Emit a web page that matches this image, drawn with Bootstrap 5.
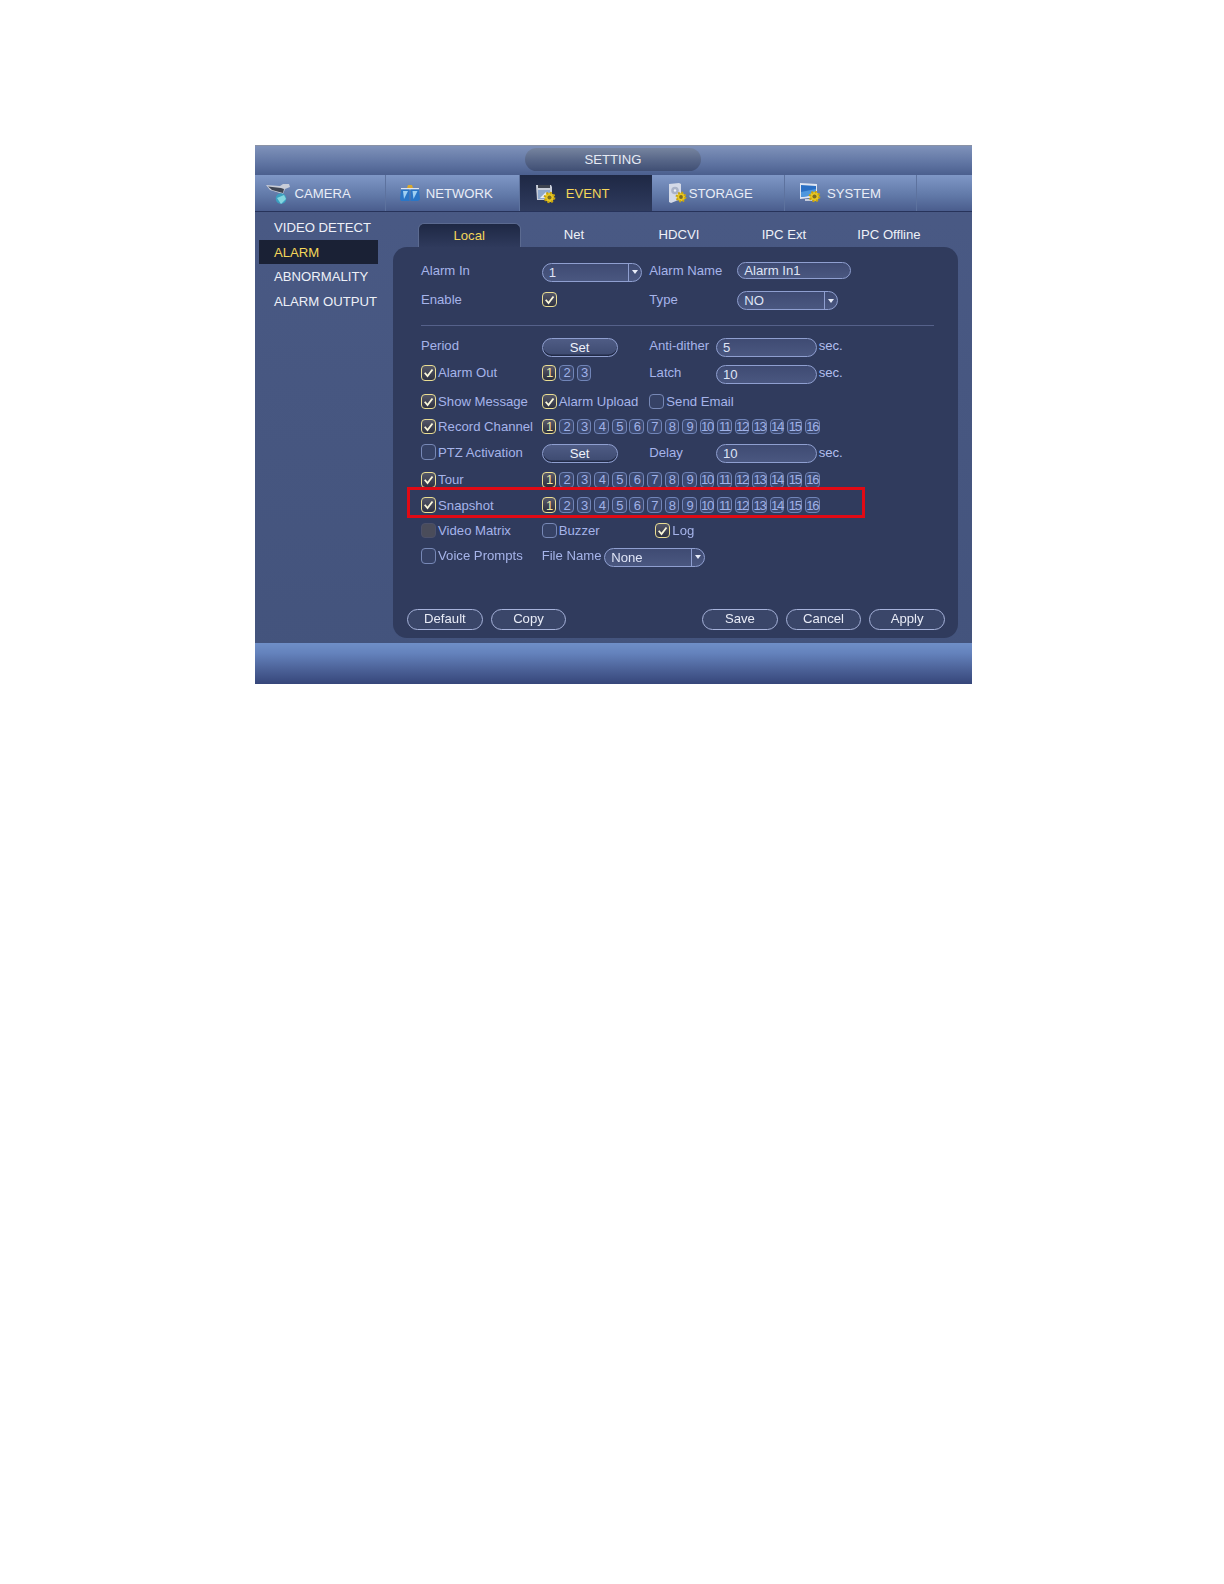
<!DOCTYPE html>
<html lang="en">
<head>
<meta charset="utf-8">
<title>SETTING</title>
<link href="https://cdn.jsdelivr.net/npm/bootstrap@5.3.0/dist/css/bootstrap.min.css" rel="stylesheet">
<style>
body{background:#fff;font:13.15px/1 "Liberation Sans",Arial,sans-serif;}
.page-wrap{padding:145px 0 0 254.5px;}
.dvr{width:717.5px;height:539px;position:relative;background:linear-gradient(180deg,#4a5a85,#43537c);border-top:1px solid #8b93a6;color:#fff;filter:blur(.35px);}
.titlebar{height:28.7px;background:linear-gradient(180deg,#7f92ba 0,#5f74a2 60%,#4b5f8e 100%);}
.titlepill{width:176px;height:23px;margin-left:270.5px;position:relative;top:2.3px;border-radius:11.5px;background:linear-gradient(180deg,#76849f 0,#566587 55%,#404f74 100%);color:#e6eaf4;}
.tabbar{height:37.3px;background:linear-gradient(180deg,#7f97c6 0,#627aa9 55%,#4a5d8d 100%);border-bottom:1px solid #27335a;}
.toptab{height:36.3px;color:#e9edf7;border-right:1px solid #5d729e;padding-top:1px;}
.toptab svg{flex:none;}
.tt-cam{width:131.5px;padding-left:11px;gap:5px}
.tt-net{width:134px;padding-left:14px;gap:5.7px}
.tt-evt{width:132px;padding-left:15.7px;gap:10px;background:linear-gradient(180deg,#1e2844,#2f3b5e);color:#f4d75a;border-right:0;}
.tt-sto{width:133px;padding-left:17px;gap:1.7px}
.tt-sys{width:132px;padding-left:15px;gap:6px}
.mainarea{height:431.3px;}
.sidemenu{width:138.8px;padding:3.5px 0 0 4.5px;flex:none;}
.sideitem{width:119px;height:24.5px;padding-left:15px;color:#eef1f8;}
.sideitem.on{background:#1a2135;color:#f4d75a;}
.rightpane{width:564.7px;}
.subtabs{height:35.3px;padding:11.3px 0 0 24.4px;}
.subtab{width:105px;height:24px;padding-bottom:1px;color:#eef1f8;}
.subtab.on{width:103px;margin-right:.8px;background:linear-gradient(180deg,#1e2844,#2f3a5c);border-radius:6px 6px 0 0;border:1px solid #5b6a90;border-bottom:0;color:#f4d75a;}
.formpanel{height:391px;background:#303b5d;border-radius:14px;padding:11.7px 0 8.3px 27.7px;color:#a6b4ea;}
.frow{height:24px;flex:none;}
.s43{margin-top:4.3px}.s33{margin-top:3.3px}.s47{margin-top:4.7px}.s10{margin-top:1px}.s16{margin-top:1.6px}.s37{margin-top:3.7px}.s13{margin-top:1.3px}.s14{margin-top:1.4px}
.c1{width:120.7px;flex:none}.c2{width:107.6px;flex:none}.c3a{width:88px;flex:none}.c3b{width:66.7px;flex:none}.c2b{width:113.6px;flex:none}.fname{width:62.6px;flex:none}
.tick{width:15px;height:15.500px;border:1.6px solid #7788b6;border-radius:4px;margin-right:2.100px;flex:none;background:#364266;}
.tick.yes{border-color:#e9dd93;background:linear-gradient(180deg,#545768,#2d3142);}
.tick.dim{border-color:#4c5069;background:#4a4c5a;}
.tick svg{display:block;width:100%;height:100%;}
.chips{gap:2.87px}
.chip{width:14.7px;height:15.500px;border:1.6px solid #7185b8;border-radius:4px;background:#3c4970;color:#a0b2e8;font-size:13px;letter-spacing:-1.2px;}
.chip.yes{border-color:#e9dd93;background:linear-gradient(180deg,#59596a,#2b2e3c);color:#f3e9a6;}
.fieldbox{height:19px;border:1.5px solid #8f9fd0;border-radius:9.5px;background:linear-gradient(180deg,#3f4b73,#4a5780);color:#dfe4f5;padding-left:6px;}
.fld-down{position:relative;top:1.5px}
.w100{width:100.7px;flex:none}.wname{width:113.4px;height:17px;flex:none}
.arrowcell{width:13px;border-left:1.5px solid #8f9fd0;margin-left:auto;height:100%;flex:none}
.arrowcell i{display:block;width:0;height:0;border:3.5px solid transparent;border-top:4px solid #e8ecf8;border-bottom:0;}
.setbtn{width:76px;height:19px;border:1.5px solid #8f9fd0;border-radius:9.5px;background:linear-gradient(180deg,#4f5c85,#3d4a70);box-shadow:inset 0 -1.5px 0 #222b47;color:#f0f2fa;}
.secs{margin-left:2px;color:#b2bfee;}
.rule{height:1px;background:#55618a;margin:14px 24px 7.4px 0;flex:none;}
.actions{margin:auto 0 0 -14px;padding-right:13px;}
.actbtn{width:75.8px;height:21.3px;border:1.5px solid #a6b2da;border-radius:10.5px;background:#3a4669;color:#e8ebf6;padding:0 0 2px;font-size:13.15px;line-height:1;}
.actbtn:hover{background:#3a4669;color:#e8ebf6;border-color:#a6b2da;}
.g78{gap:7.8px}
.footbar{height:40.7px;background:linear-gradient(180deg,#6f8fc8 0,#6482bc 25%,#4b6197 65%,#36467a 100%);}
.redbox{position:absolute;left:152.2px;top:341.3px;width:458.3px;height:30.4px;border:3px solid #e00a14;pointer-events:none;}
</style>
</head>
<body>
<svg width="0" height="0" class="position-absolute">
  <symbol id="gear" viewBox="0 0 14 14">
    <circle cx="7" cy="7" r="5" fill="#e9c924" stroke="#c9a40e" stroke-width="2.6" stroke-dasharray="2 1.9"/>
    <circle cx="7" cy="7" r="2.2" fill="#7b6b23"/>
  </symbol>
  <symbol id="chk" viewBox="0 0 12 12">
    <path d="M2.5 6l2.6 3 4.6-6" fill="none" stroke="#f8f5d8" stroke-width="1.7"/>
  </symbol>
</svg>
<div class="page-wrap">
<div class="dvr d-flex flex-column">
  <div class="titlebar"><div class="titlepill d-flex align-items-center justify-content-center">SETTING</div></div>
  <div class="tabbar d-flex">
    <div class="toptab tt-cam d-flex align-items-center">
      <svg width="24" height="21" viewBox="0 0 24 21"><path d="M0 2l14 1 3-2h6l1 3-5 2-2 5-13-4z" fill="#c9cdd8"/><path d="M2 3.500l13 1.500 3 1-1 4-11-3z" fill="#3f4552"/><circle cx="15" cy="15.500" r="5.300" fill="#3b9fc0"/><path d="M11 15l7-3 2 4-5 5z" fill="#84d5df"/></svg>
      <span>CAMERA</span>
    </div>
    <div class="toptab tt-net d-flex align-items-center">
      <svg width="20" height="17" viewBox="0 0 20 17"><path d="M8 0h4l1 3H7z" fill="#d9a82c"/><path d="M1 3h18v1.500H1z" fill="#dfe6f2"/><path d="M1 4.500h8.500V16H1l-1-2z" fill="#2a76c6"/><path d="M10.500 4.500H19l1 10-2 1.500h-7.500z" fill="#2a76c6"/><path d="M3 6h5l-4 8zM12.500 6h5l-4 8z" fill="#9ed0f2"/></svg>
      <span>NETWORK</span>
    </div>
    <div class="toptab tt-evt d-flex align-items-center">
      <svg width="20" height="21" viewBox="0 0 20 21"><path d="M0 2h15l1 2v13H1z" fill="#c9ced9"/><path d="M2 2h12v3H2z" fill="#3e434f"/><path d="M2 7h12v9H2z" fill="#8ea7cc"/><path d="M4 15l6-6 2 6z" fill="#e9edf5"/><use href="#gear" x="7" y="8" width="13" height="13"/></svg>
      <span>EVENT</span>
    </div>
    <div class="toptab tt-sto d-flex align-items-center">
      <svg width="18" height="20" viewBox="0 0 18 20"><path d="M0 1l10-1 2 1v15l-10 4-2-1z" fill="#d4dae8"/><circle cx="6" cy="7.500" r="3.800" fill="#aab3c8"/><circle cx="6" cy="7.500" r="1.200" fill="#eef1f7"/><use href="#gear" x="6" y="8" width="12" height="12"/></svg>
      <span>STORAGE</span>
    </div>
    <div class="toptab tt-sys d-flex align-items-center">
      <svg width="21" height="20" viewBox="0 0 21 20"><path d="M0 0l17 1v13l-17 2z" fill="#dfe5f2"/><path d="M1 2l15 1v9l-15 2z" fill="#2a6fc4"/><path d="M1 9l15-3v6l-15 2z" fill="#4e97de"/><path d="M5 16h7v2h-7z" fill="#c4cbdb"/><use href="#gear" x="8" y="7" width="13" height="13"/></svg>
      <span>SYSTEM</span>
    </div>
  </div>
  <div class="mainarea d-flex">
    <div class="sidemenu">
      <div class="sideitem d-flex align-items-center">VIDEO DETECT</div>
      <div class="sideitem on d-flex align-items-center">ALARM</div>
      <div class="sideitem d-flex align-items-center">ABNORMALITY</div>
      <div class="sideitem d-flex align-items-center">ALARM OUTPUT</div>
    </div>
    <div class="rightpane">
      <div class="subtabs d-flex">
        <div class="subtab on d-flex align-items-center justify-content-center">Local</div>
        <div class="subtab d-flex align-items-center justify-content-center">Net</div>
        <div class="subtab d-flex align-items-center justify-content-center">HDCVI</div>
        <div class="subtab d-flex align-items-center justify-content-center">IPC Ext</div>
        <div class="subtab d-flex align-items-center justify-content-center">IPC Offline</div>
      </div>
      <div class="formpanel d-flex flex-column">
        <div class="frow d-flex align-items-center">
          <div class="c1">Alarm In</div>
          <div class="c2"><div class="fieldbox w100 fld-down d-flex align-items-center">1<span class="arrowcell d-flex align-items-center justify-content-center"><i></i></span></div></div>
          <div class="c3a">Alarm Name</div>
          <div class="fieldbox wname d-flex align-items-center">Alarm In1</div>
        </div>
        <div class="frow s43 d-flex align-items-center">
          <div class="c1">Enable</div>
          <div class="c2"><span class="tick yes d-block"><svg><use href="#chk"/></svg></span></div>
          <div class="c3a">Type</div>
          <div class="fieldbox w100 fld-down d-flex align-items-center">NO<span class="arrowcell d-flex align-items-center justify-content-center"><i></i></span></div>
        </div>
        <div class="rule"></div>
        <div class="frow d-flex align-items-center">
          <div class="c1">Period</div>
          <div class="c2"><div class="setbtn fld-down d-flex align-items-center justify-content-center">Set</div></div>
          <div class="c3b">Anti-dither</div>
          <div class="fieldbox w100 fld-down d-flex align-items-center">5</div><span class="secs">sec.</span>
        </div>
        <div class="frow s33 d-flex align-items-center">
          <div class="c1 d-flex align-items-center"><span class="tick yes"><svg><use href="#chk"/></svg></span>Alarm Out</div>
          <div class="c2 d-flex chips">
            <span class="chip yes d-flex align-items-center justify-content-center">1</span><span class="chip d-flex align-items-center justify-content-center">2</span><span class="chip d-flex align-items-center justify-content-center">3</span>
          </div>
          <div class="c3b">Latch</div>
          <div class="fieldbox w100 fld-down d-flex align-items-center">10</div><span class="secs">sec.</span>
        </div>
        <div class="frow s47 d-flex align-items-center">
          <div class="c1 d-flex align-items-center"><span class="tick yes"><svg><use href="#chk"/></svg></span>Show Message</div>
          <div class="c2 d-flex align-items-center"><span class="tick yes"><svg><use href="#chk"/></svg></span>Alarm Upload</div>
          <div class="d-flex align-items-center"><span class="tick"></span>Send Email</div>
        </div>
        <div class="frow s10 d-flex align-items-center">
          <div class="c1 d-flex align-items-center"><span class="tick yes"><svg><use href="#chk"/></svg></span>Record Channel</div>
          <div class="d-flex chips">
            <span class="chip yes d-flex align-items-center justify-content-center">1</span><span class="chip d-flex align-items-center justify-content-center">2</span><span class="chip d-flex align-items-center justify-content-center">3</span><span class="chip d-flex align-items-center justify-content-center">4</span><span class="chip d-flex align-items-center justify-content-center">5</span><span class="chip d-flex align-items-center justify-content-center">6</span><span class="chip d-flex align-items-center justify-content-center">7</span><span class="chip d-flex align-items-center justify-content-center">8</span><span class="chip d-flex align-items-center justify-content-center">9</span><span class="chip d-flex align-items-center justify-content-center">10</span><span class="chip d-flex align-items-center justify-content-center">11</span><span class="chip d-flex align-items-center justify-content-center">12</span><span class="chip d-flex align-items-center justify-content-center">13</span><span class="chip d-flex align-items-center justify-content-center">14</span><span class="chip d-flex align-items-center justify-content-center">15</span><span class="chip d-flex align-items-center justify-content-center">16</span>
          </div>
        </div>
        <div class="frow s16 d-flex align-items-center">
          <div class="c1 d-flex align-items-center"><span class="tick"></span>PTZ Activation</div>
          <div class="c2"><div class="setbtn fld-down d-flex align-items-center justify-content-center">Set</div></div>
          <div class="c3b">Delay</div>
          <div class="fieldbox w100 fld-down d-flex align-items-center">10</div><span class="secs">sec.</span>
        </div>
        <div class="frow s37 d-flex align-items-center">
          <div class="c1 d-flex align-items-center"><span class="tick yes"><svg><use href="#chk"/></svg></span>Tour</div>
          <div class="d-flex chips">
            <span class="chip yes d-flex align-items-center justify-content-center">1</span><span class="chip d-flex align-items-center justify-content-center">2</span><span class="chip d-flex align-items-center justify-content-center">3</span><span class="chip d-flex align-items-center justify-content-center">4</span><span class="chip d-flex align-items-center justify-content-center">5</span><span class="chip d-flex align-items-center justify-content-center">6</span><span class="chip d-flex align-items-center justify-content-center">7</span><span class="chip d-flex align-items-center justify-content-center">8</span><span class="chip d-flex align-items-center justify-content-center">9</span><span class="chip d-flex align-items-center justify-content-center">10</span><span class="chip d-flex align-items-center justify-content-center">11</span><span class="chip d-flex align-items-center justify-content-center">12</span><span class="chip d-flex align-items-center justify-content-center">13</span><span class="chip d-flex align-items-center justify-content-center">14</span><span class="chip d-flex align-items-center justify-content-center">15</span><span class="chip d-flex align-items-center justify-content-center">16</span>
          </div>
        </div>
        <div class="frow s13 d-flex align-items-center">
          <div class="c1 d-flex align-items-center"><span class="tick yes"><svg><use href="#chk"/></svg></span>Snapshot</div>
          <div class="d-flex chips">
            <span class="chip yes d-flex align-items-center justify-content-center">1</span><span class="chip d-flex align-items-center justify-content-center">2</span><span class="chip d-flex align-items-center justify-content-center">3</span><span class="chip d-flex align-items-center justify-content-center">4</span><span class="chip d-flex align-items-center justify-content-center">5</span><span class="chip d-flex align-items-center justify-content-center">6</span><span class="chip d-flex align-items-center justify-content-center">7</span><span class="chip d-flex align-items-center justify-content-center">8</span><span class="chip d-flex align-items-center justify-content-center">9</span><span class="chip d-flex align-items-center justify-content-center">10</span><span class="chip d-flex align-items-center justify-content-center">11</span><span class="chip d-flex align-items-center justify-content-center">12</span><span class="chip d-flex align-items-center justify-content-center">13</span><span class="chip d-flex align-items-center justify-content-center">14</span><span class="chip d-flex align-items-center justify-content-center">15</span><span class="chip d-flex align-items-center justify-content-center">16</span>
          </div>
        </div>
        <div class="frow s14 d-flex align-items-center">
          <div class="c1 d-flex align-items-center"><span class="tick dim"></span>Video Matrix</div>
          <div class="c2b d-flex align-items-center"><span class="tick"></span>Buzzer</div>
          <div class="d-flex align-items-center"><span class="tick yes"><svg><use href="#chk"/></svg></span>Log</div>
        </div>
        <div class="frow s13 d-flex align-items-center">
          <div class="c1 d-flex align-items-center"><span class="tick"></span>Voice Prompts</div>
          <div class="fname">File Name</div>
          <div class="fieldbox fld-down w100 d-flex align-items-center">None<span class="arrowcell d-flex align-items-center justify-content-center"><i></i></span></div>
        </div>
        <div class="actions d-flex">
          <div class="d-flex g78 me-auto"><button type="button" class="btn actbtn">Default</button><button type="button" class="btn actbtn">Copy</button></div>
          <div class="d-flex g78"><button type="button" class="btn actbtn">Save</button><button type="button" class="btn actbtn">Cancel</button><button type="button" class="btn actbtn">Apply</button></div>
        </div>
      </div>
    </div>
  </div>
  <div class="footbar"></div>
  <div class="redbox"></div>
</div>
</div>
<script src="https://cdn.jsdelivr.net/npm/bootstrap@5.3.0/dist/js/bootstrap.bundle.min.js"></script>
</body>
</html>
